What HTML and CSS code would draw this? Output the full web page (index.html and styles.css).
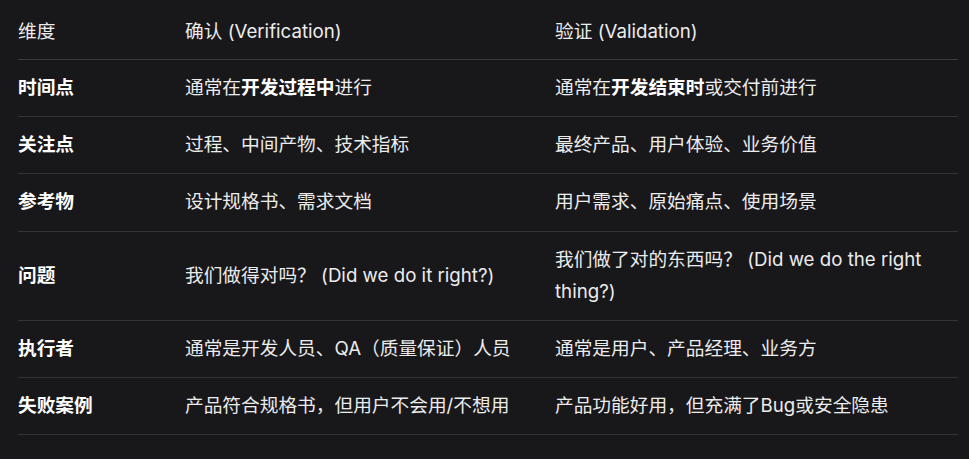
FILE: index.html
```html
<!DOCTYPE html>
<html lang="zh-CN">
<head>
<meta charset="utf-8">
<title>确认与验证</title>
<link rel="stylesheet" href="styles.css">
</head>
<body>
<div class="wrap">
<table class="cmp">
<colgroup><col class="c1"><col class="c2"><col class="c3"></colgroup>
<thead>
<tr><th>维度</th><th>确认 (Verification)</th><th>验证 (Validation)</th></tr>
</thead>
<tbody>
<tr><td class="dim">时间点</td><td>通常在<strong>开发过程中</strong>进行</td><td>通常在<strong>开发结束时</strong>或交付前进行</td></tr>
<tr><td class="dim">关注点</td><td>过程、中间产物、技术指标</td><td>最终产品、用户体验、业务价值</td></tr>
<tr><td class="dim">参考物</td><td>设计规格书、需求文档</td><td>用户需求、原始痛点、使用场景</td></tr>
<tr><td class="dim">问题</td><td>我们做得对吗？ (Did we do it right?)</td><td>我们做了对的东西吗？ (Did we do the right thing?)</td></tr>
<tr><td class="dim">执行者</td><td>通常是开发人员、QA（质量保证）人员</td><td>通常是用户、产品经理、业务方</td></tr>
<tr><td class="dim">失败案例</td><td>产品符合规格书，但用户不会用/不想用</td><td>产品功能好用，但充满了Bug或安全隐患</td></tr>
</tbody>
</table>
</div>
</body>
</html>
```

FILE: styles.css
```css
html, body {
  margin: 0;
  background: #18181b;
}
.wrap {
  padding: 0 11px 0 18px;
}
.cmp {
  width: 100%;
  border-collapse: collapse;
  table-layout: fixed;
  font-family: Inter, "Noto Sans CJK SC", sans-serif;
  font-size: 18.7px;
  line-height: 32px;
  color: #ececec;
}
.c1 { width: 167px; }
.c2 { width: 370px; }
.cmp th {
  font-weight: 400;
  text-align: left;
  padding: 16px 0 11px 0;
  border-bottom: 1px solid #3a3a3d;
}
.cmp td {
  padding: 12.1px 8px 12.1px 0;
  border-bottom: 1px solid #333336;
  vertical-align: middle;
}
.cmp td.dim,
.cmp strong {
  font-weight: 700;
  color: #ffffff;
}
```
